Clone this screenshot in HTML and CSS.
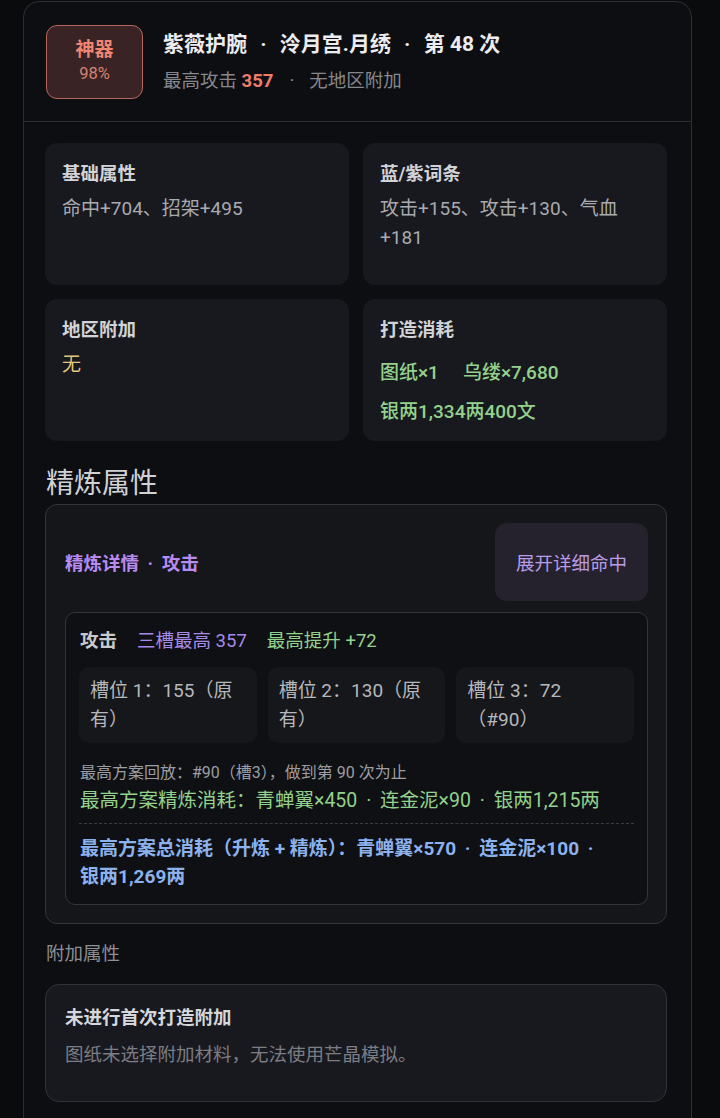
FILE: index.html
```html
<!DOCTYPE html>
<html lang="zh-CN">
<head>
<meta charset="utf-8">
<link rel="stylesheet" href="styles.css">
</head>
<body>
<div class="panel">
  <header class="head">
    <div class="badge">
      <div class="badge-name">神器</div>
      <div class="badge-pct">98%</div>
    </div>
    <div class="head-text">
      <div class="title">紫薇护腕 <span class="dot">·</span> 泠月宫.月绣 <span class="dot">·</span> 第 48 次</div>
      <div class="sub">最高攻击 <b class="red">357</b><span class="sep">·</span>无地区附加</div>
    </div>
  </header>
  <section class="body">
    <div class="grid">
      <div class="card">
        <div class="card-label">基础属性</div>
        <div class="card-value">命中+704、招架+495</div>
      </div>
      <div class="card">
        <div class="card-label">蓝/紫词条</div>
        <div class="card-value">攻击+155、攻击+130、气血+181</div>
      </div>
      <div class="card">
        <div class="card-label">地区附加</div>
        <div class="card-value yellow">无</div>
      </div>
      <div class="card">
        <div class="card-label">打造消耗</div>
        <div class="cost-list">
          <span>图纸×1</span>
          <span>乌缕×7,680</span>
          <span>银两1,334两400文</span>
        </div>
      </div>
    </div>

    <h2 class="section-title">精炼属性</h2>
    <div class="refine">
      <div class="refine-head">
        <div class="refine-title">精炼详情 <span class="dot">·</span> 攻击</div>
        <div class="btn">展开详细命中</div>
      </div>
      <div class="refine-inner">
        <div class="stat-line"><b class="stat-name">攻击</b><span class="purple">三槽最高 357</span><span class="green">最高提升 +72</span></div>
        <div class="slots">
          <div class="slot"><span>槽位 1：155（原有）</span></div>
          <div class="slot"><span>槽位 2：130（原有）</span></div>
          <div class="slot"><span>槽位 3：72（#90）</span></div>
        </div>
        <div class="replay">最高方案回放：#90（槽3），做到第 90 次为止</div>
        <div class="refine-cost">最高方案精炼消耗：青蝉翼×450 <span class="dot">·</span> 连金泥×90 <span class="dot">·</span> 银两1,215两</div>
        <div class="total-cost">最高方案总消耗（升炼 + 精炼）：青蝉翼×570 <span class="dot">·</span> 连金泥×100 <span class="dot">·</span> <span class="nowrap">银两1,269两</span></div>
      </div>
    </div>

    <h3 class="sub-title">附加属性</h3>
    <div class="extra">
      <div class="extra-title">未进行首次打造附加</div>
      <div class="extra-text">图纸未选择附加材料，无法使用芒晶模拟。</div>
    </div>
  </section>
</div>
</body>
</html>
```

FILE: styles.css
```css
* { box-sizing: border-box; }
html, body {
  margin: 0;
  padding: 0;
  background: #0a0b0d;
}
body {
  font-family: "Roboto", "Noto Sans CJK SC", sans-serif;
  color: #c8c9cd;
  font-size: 19px;
  height: 1118px;
  overflow: hidden;
}
.dot { margin: 0 4px; }
.nowrap { white-space: nowrap; }
.panel {
  margin: 1px 0 0 23px;
  width: 669px;
  min-height: 1200px;
  background: #0d0e11;
  border: 1px solid #2d2f36;
  border-radius: 16px;
}
.head {
  display: flex;
  align-items: center;
  gap: 20px;
  padding: 21px 21px 21px 22px;
  border-bottom: 1.5px solid #2d2f36;
  height: 120px;
}
.badge {
  width: 97px;
  height: 74px;
  border: 1.5px solid #b8675c;
  background: #3a2325;
  border-radius: 11px;
  display: flex;
  flex-direction: column;
  align-items: center;
  justify-content: center;
}
.badge-name {
  font-weight: 700;
  font-size: 19px;
  line-height: 24px;
  color: #f08574;
}
.badge-pct {
  font-size: 16.5px;
  line-height: 22px;
  color: #d48373;
  margin-top: 1px;
}
.head-text {
  display: flex;
  flex-direction: column;
  gap: 8px;
}
.title {
  font-size: 21px;
  font-weight: 700;
  line-height: 30px;
  color: #ececee;
}
.title .dot { margin: 0 8px; }
.sub {
  font-size: 18.5px;
  line-height: 28px;
  color: #86878d;
}
.red { color: #f07d6c; font-weight: 700; }
.sep { margin: 0 15px 0 16px; }

.body {
  padding: 21px 24px 0 21px;
}
.grid {
  display: grid;
  grid-template-columns: 1fr 1fr;
  gap: 14px;
}
.card {
  background: #18191e;
  border-radius: 12px;
  height: 142px;
  padding: 18px 16px 16px 17px;
}
.card-label {
  font-weight: 700;
  font-size: 18.5px;
  line-height: 26px;
  color: #d2d3d7;
  margin-bottom: 7px;
}
.card-value {
  font-size: 19px;
  line-height: 29px;
  color: #a9aaaf;
}
.yellow { color: #e3c77d; }
.cost-list {
  display: flex;
  flex-wrap: wrap;
  gap: 9px 24px;
  margin-top: 15px;
  font-size: 19px;
  line-height: 30px;
  font-weight: 500;
  color: #93d28c;
}

.section-title {
  margin: 25px 0 2px 1px;
  font-size: 28px;
  line-height: 36px;
  font-weight: 400;
  color: #d0d1d5;
}
.refine {
  background: #15161a;
  border: 1px solid #33353d;
  border-radius: 12px;
  padding: 18px 18px 18px 19px;
}
.refine-head {
  display: flex;
  align-items: center;
  justify-content: space-between;
  margin-bottom: 11px;
}
.refine-title {
  font-weight: 700;
  font-size: 18.5px;
  color: #b98af0;
}
.btn {
  width: 153px;
  height: 78px;
  border-radius: 12px;
  background: #25222d;
  color: #b99be8;
  font-size: 18.5px;
  display: flex;
  align-items: center;
  justify-content: center;
}
.refine-inner {
  background: #0f1013;
  border: 1px solid #33353d;
  border-radius: 10px;
  padding: 14px 13px 13px 13px;
}
.stat-line {
  display: flex;
  gap: 20px;
  font-size: 18.5px;
  line-height: 28px;
  padding-left: 1px;
}
.stat-name { color: #c9cace; font-weight: 700; }
.purple { color: #a68ae9; }
.green { color: #93d28c; }
.slots {
  display: grid;
  grid-template-columns: repeat(3, 1fr);
  gap: 11px;
  margin-top: 12px;
}
.slot {
  background: #16171b;
  border-radius: 10px;
  padding: 9px 19px 9px 11px;
  font-size: 19px;
  line-height: 29px;
  color: #b6b7bb;
  height: 76px;
}
.replay {
  margin-top: 19px;
  font-size: 16px;
  line-height: 22px;
  color: #9d9ea3;
  padding-left: 1px;
}
.refine-cost {
  margin-top: 3px;
  font-size: 19.5px;
  line-height: 28px;
  color: #93d28c;
  padding-left: 1px;
  padding-bottom: 8px;
  border-bottom: 1px dashed #3a3c44;
}
.total-cost {
  margin-top: 11px;
  font-size: 19px;
  line-height: 28px;
  font-weight: 700;
  color: #8cb2ee;
  padding-left: 1px;
}

.sub-title {
  margin: 17px 0 17px 1px;
  font-size: 18.5px;
  line-height: 26px;
  font-weight: 400;
  color: #8e8f94;
}
.extra {
  background: #18191f;
  border: 1px solid #30323a;
  border-radius: 14px;
  padding: 20px 19px 33px 19px;
}
.extra-title {
  font-weight: 700;
  font-size: 18.5px;
  line-height: 26px;
  color: #d6d7db;
  margin-bottom: 11px;
}
.extra-text {
  font-size: 18.5px;
  line-height: 26px;
  color: #7c7d83;
}
```
